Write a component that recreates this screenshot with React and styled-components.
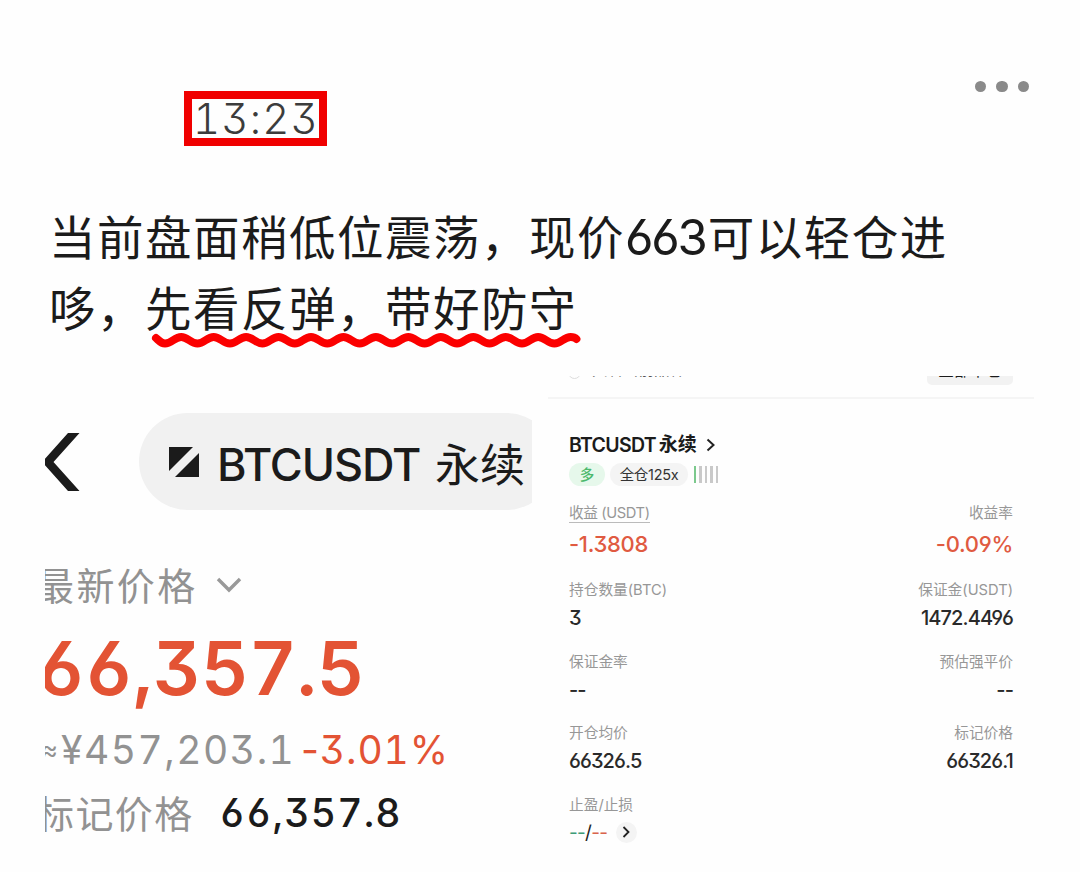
import React from "react";
import styled, { createGlobalStyle, css } from "styled-components";

const GlobalStyle = createGlobalStyle`
  * {
    box-sizing: border-box;
  }

  body {
    margin: 0;
    background: #fefefe;
    font-family: Inter, "Noto Sans CJK SC", sans-serif;
    color: #1b1b1b;
  }
`;

const positionRows = [
  {
    left: { label: "收益 (USDT)", value: "-1.3808", underline: true },
    right: { label: "收益率", value: "-0.09%" },
    loss: true,
  },
  {
    left: { label: "持仓数量(BTC)", value: "3" },
    right: { label: "保证金(USDT)", value: "1472.4496" },
  },
  {
    left: { label: "保证金率", value: "--" },
    right: { label: "预估强平价", value: "--" },
  },
  {
    left: { label: "开仓均价", value: "66326.5" },
    right: { label: "标记价格", value: "66326.1" },
  },
];

// wavy marker line, one period is 32.45px
const wavePath = () => {
  let d = "M5 6 C8 8.5 10 11.5 14 11.5";
  let x = 14;
  for (let i = 0; i < 12; i++) {
    d += ` C${x + 6.5} 11.5 ${x + 9.7} 5 ${x + 16.2} 5`;
    d += ` S${x + 25.9} 11.5 ${x + 32.45} 11.5`;
    x += 32.45;
  }
  return `${d} C${x + 6.5} 11.5 ${x + 9.7} 5 ${x + 16.2} 5 Q${x + 20} 5 ${x + 22} 7`;
};

const Field = ({ label, value, underline, loss, end }) => (
  <FieldBox $end={end}>
    <Label $underline={underline}>{label}</Label>
    <Value $loss={loss}>{value}</Value>
  </FieldBox>
);

const TickerShot = () => (
  <Ticker>
    <TickerHead>
      <BackIcon width="36" height="60" viewBox="0 0 36 60">
        <path d="M23 1H34.5L8.5 30L34.5 59H23L-3 30Z" fill="#1b1b1b" />
      </BackIcon>
      <Pill>
        <svg width="30" height="30" viewBox="0 0 30 30" fill="#1b1b1b">
          <path d="M0 0H24L0 24Z" />
          <path d="M30 6V30H6Z" />
        </svg>
        <PillName>BTCUSDT</PillName>
        <PillKind>永续</PillKind>
      </Pill>
    </TickerHead>
    <LastLabel>
      <GreyText $gap="2.4px">最新价格</GreyText>
      <svg width="26" height="20" viewBox="0 0 26 20">
        <path d="M2 6L13 17L24 6" fill="none" stroke="#999" strokeWidth="3.4" />
      </svg>
    </LastLabel>
    <LastPrice>66,357.5</LastPrice>
    <FiatLine>
      <Approx>≈</Approx>
      <Fiat>¥457,203.1</Fiat>
      <Change>
        <Minus>-</Minus>3.01%
      </Change>
    </FiatLine>
    <MarkLine>
      <GreyText $gap="1.4px">标记价格</GreyText>
      <MarkPrice>66,357.8</MarkPrice>
    </MarkLine>
  </Ticker>
);

const PositionShot = () => (
  <Position>
    <FilterBar>
      <Radio />
      <FilterText>只看当前品种</FilterText>
      <FilterButton>全部平仓</FilterButton>
    </FilterBar>
    <PositionBody>
      <Symbol>
        <span>BTCUSDT</span>
        <SymbolKind>永续</SymbolKind>
        <svg width="10" height="14" viewBox="0 0 10 14">
          <path d="M1.5 1.5L7.5 7L1.5 12.5" fill="none" stroke="#222" strokeWidth="2" />
        </svg>
      </Symbol>
      <Tags>
        <Side>多</Side>
        <Leverage>全仓125x</Leverage>
        <Bars>
          <Bar $on />
          <Bar />
          <Bar />
          <Bar />
          <Bar />
        </Bars>
      </Tags>
      {positionRows.map((row) => (
        <Row key={row.left.label} $loss={row.loss}>
          <Field {...row.left} loss={row.loss} />
          <Field {...row.right} loss={row.loss} end />
        </Row>
      ))}
      <FieldBox>
        <Label>止盈/止损</Label>
        <StopLine>
          <Dashes $color="#3f9c78">--</Dashes>
          <Dashes $color="#222">/</Dashes>
          <Dashes $color="#d9644c">--</Dashes>
          <More>
            <svg width="9" height="14" viewBox="0 0 9 14">
              <path d="M1.5 2L6.5 7L1.5 12" fill="none" stroke="#222" strokeWidth="1.8" />
            </svg>
          </More>
        </StopLine>
      </FieldBox>
    </PositionBody>
  </Position>
);

const App = () => (
  <>
    <GlobalStyle />
    <Post>
      <Header>
        <Time>13:23</Time>
        <Menu>
          <Dot />
          <Dot />
          <Dot />
        </Menu>
      </Header>
      <Message>
        <Line>
          当前盘面稍低位震荡，现价<Num>663</Num>可以轻仓进
        </Line>
        <Line>
          哆，先看反弹，带好防守
          <Wave width="430" height="18" viewBox="0 0 430 18">
            <path d={wavePath()} />
          </Wave>
        </Line>
      </Message>
      <Shots>
        <TickerShot />
        <PositionShot />
      </Shots>
    </Post>
  </>
);

const slabDigits = css`
  font-feature-settings: "tnum", "cv03", "cv04", "cv09";
`;

const Post = styled.main`
  width: 1080px;
  height: 872px;
  padding: 75px 46px 0 45px;
  overflow: hidden;
`;

const Header = styled.header`
  display: flex;
  justify-content: space-between;
  align-items: flex-start;
  height: 126px;
  padding: 0 5px 0 139px;
`;

const Time = styled.time`
  width: 143px;
  height: 55px;
  margin-top: 16px;
  padding-left: 1px;
  border: 8px solid #f00000;
  color: #3c3c3c;
  font-size: 42px;
  font-weight: 300;
  line-height: 40px;
  letter-spacing: 1.2px;
  text-align: center;
  white-space: nowrap;
  ${slabDigits}
`;

const Menu = styled.div`
  display: flex;
  gap: 10px;
  padding-top: 5.5px;
`;

const Dot = styled.span`
  width: 11.5px;
  height: 11.5px;
  border-radius: 50%;
  background: #8a8a8a;
`;

const Message = styled.div`
  height: 174.5px;
  padding-left: 4px;
  font-size: 46.5px;
  letter-spacing: 1.5px;
`;

const Line = styled.p`
  position: relative;
  margin: 0;
  height: 72px;
  line-height: 73px;
  white-space: nowrap;
`;

const Num = styled.span`
  margin-right: 2px;
  font-size: 49px;
  letter-spacing: -2.2px;
  font-feature-settings: "cv03";
`;

const Wave = styled.svg`
  position: absolute;
  left: 102px;
  top: 59px;
  fill: none;
  stroke: #fb0000;
  stroke-width: 8;
  stroke-linecap: round;
`;

const Shots = styled.div`
  display: grid;
  grid-template-columns: 487px 486px;
  gap: 16px;
`;

const Ticker = styled.section`
  height: 485px;
  overflow: hidden;
  white-space: nowrap;
`;

const TickerHead = styled.div`
  display: flex;
  align-items: center;
  gap: 58px;
  padding-top: 37.5px;
`;

const BackIcon = styled.svg`
  flex-shrink: 0;
`;

const Pill = styled.div`
  display: flex;
  flex-shrink: 0;
  align-items: center;
  width: 416px;
  height: 97px;
  padding-left: 30px;
  border-radius: 49px;
  background: #f1f1f1;
`;

const PillName = styled.span`
  width: 236px;
  padding: 6px 0 0 18px;
  font-size: 45px;
  font-weight: 500;
  letter-spacing: -1.1px;
`;

const PillKind = styled.span`
  padding-top: 1px;
  font-size: 45px;
`;

const GreyText = styled.span`
  color: #929292;
  font-size: 38px;
  letter-spacing: ${(p) => p.$gap};
`;

const LastLabel = styled.div`
  display: flex;
  align-items: center;
  gap: 18px;
  height: 60px;
  margin: 43px 0 0 -9px;
`;

const LastPrice = styled.div`
  height: 90px;
  margin: 10px 0 0 -8px;
  color: #e35334;
  font-size: 74px;
  font-weight: 600;
  line-height: 90px;
  letter-spacing: 0.1px;
  ${slabDigits}
`;

const FiatLine = styled.div`
  display: flex;
  align-items: center;
  height: 60px;
  margin-top: 6px;
  font-size: 39px;
  ${slabDigits}
`;

const Approx = styled.span`
  width: 20px;
  margin-left: -4px;
  color: #929292;
  font-size: 26px;
`;

const Fiat = styled.span`
  width: 240px;
  color: #929292;
  letter-spacing: 1.5px;
`;

const Change = styled.span`
  color: #e35334;
  letter-spacing: 0.9px;
`;

const Minus = styled.span`
  font-feature-settings: normal;
`;

const MarkLine = styled.div`
  display: flex;
  align-items: center;
  gap: 26px;
  height: 60px;
  margin: 2px 0 0 -9px;
`;

const MarkPrice = styled.span`
  padding-top: 3px;
  font-size: 39px;
  font-weight: 500;
  letter-spacing: 1.2px;
  ${slabDigits}
`;

const Position = styled.section`
  height: 485px;
  overflow: hidden;
  white-space: nowrap;
`;

const FilterBar = styled.div`
  display: flex;
  align-items: flex-end;
  height: 23.5px;
  padding: 0 21px 12px 20px;
  border-bottom: 2px solid #f5f5f5;
`;

const Radio = styled.span`
  flex-shrink: 0;
  width: 13px;
  height: 13px;
  margin-bottom: 6px;
  border: 1px solid #ddd;
  border-radius: 50%;
`;

const FilterText = styled.span`
  margin: 0 auto 5px 11px;
  color: #555;
  font-size: 15.5px;
  line-height: 20px;
`;

const FilterButton = styled.span`
  width: 86px;
  height: 26px;
  border-radius: 5px;
  background: #f2f2f2;
  font-size: 16px;
  line-height: 23px;
  text-align: center;
`;

const PositionBody = styled.div`
  padding: 34px 21px 0 21px;
`;

const Symbol = styled.div`
  display: flex;
  align-items: center;
  height: 24px;
  font-size: 19.5px;
  font-weight: 600;
  letter-spacing: -0.7px;
`;

const SymbolKind = styled.span`
  margin: 0 9px 0 3px;
  font-size: 19px;
  line-height: 22px;
  letter-spacing: 0;
`;

const Tags = styled.div`
  display: flex;
  align-items: center;
  height: 24px;
  margin: 5px 0 18px;
  font-size: 14.5px;
  line-height: 23px;
`;

const Side = styled.span`
  width: 36px;
  height: 23px;
  margin-right: 5px;
  border-radius: 12px;
  background: #e6f8eb;
  color: #4cb86c;
  font-weight: 500;
  text-align: center;
`;

const Leverage = styled.span`
  width: 78px;
  height: 23px;
  border-radius: 12px;
  background: #f4f4f4;
  color: #333;
  letter-spacing: -0.3px;
  text-align: center;
`;

const Bars = styled.span`
  display: flex;
  gap: 3px;
  margin-left: 5.5px;
`;

const Bar = styled.span`
  width: 2.6px;
  height: 17px;
  background: ${(p) => (p.$on ? "#7cc98d" : "#c9c9c9")};
`;

const Row = styled.div`
  display: flex;
  justify-content: space-between;
  height: ${(p) => (p.$loss ? "77px" : "71.7px")};
`;

const FieldBox = styled.div`
  display: flex;
  flex-direction: column;
  align-items: ${(p) => (p.$end ? "flex-end" : "flex-start")};
`;

const Label = styled.span`
  height: 19px;
  color: #979797;
  font-size: 14.7px;
  line-height: 19px;
  letter-spacing: ${(p) => (p.$underline ? "-0.4px" : "0")};
  border-bottom: ${(p) => (p.$underline ? "1px solid #bbb" : "none")};
`;

const Value = styled.span`
  margin-top: ${(p) => (p.$loss ? "9px" : "6px")};
  color: ${(p) => (p.$loss ? "#e05a41" : "#2a2a2a")};
  font-size: ${(p) => (p.$loss ? "22px" : "20px")};
  font-weight: 500;
  line-height: 24px;
  letter-spacing: ${(p) => (p.$loss ? "-0.3px" : "-0.9px")};
  font-feature-settings: "cv03", "cv04", "cv09";
`;

const StopLine = styled.div`
  display: flex;
  align-items: center;
  height: 24px;
  margin-top: 5px;
  font-size: 19px;
`;

const Dashes = styled.span`
  color: ${(p) => p.$color};
  letter-spacing: -0.7px;
`;

const More = styled.span`
  display: flex;
  align-items: center;
  justify-content: center;
  width: 21px;
  height: 21px;
  margin-left: 8.5px;
  border-radius: 50%;
  background: #f4f4f4;
`;

export default App;
